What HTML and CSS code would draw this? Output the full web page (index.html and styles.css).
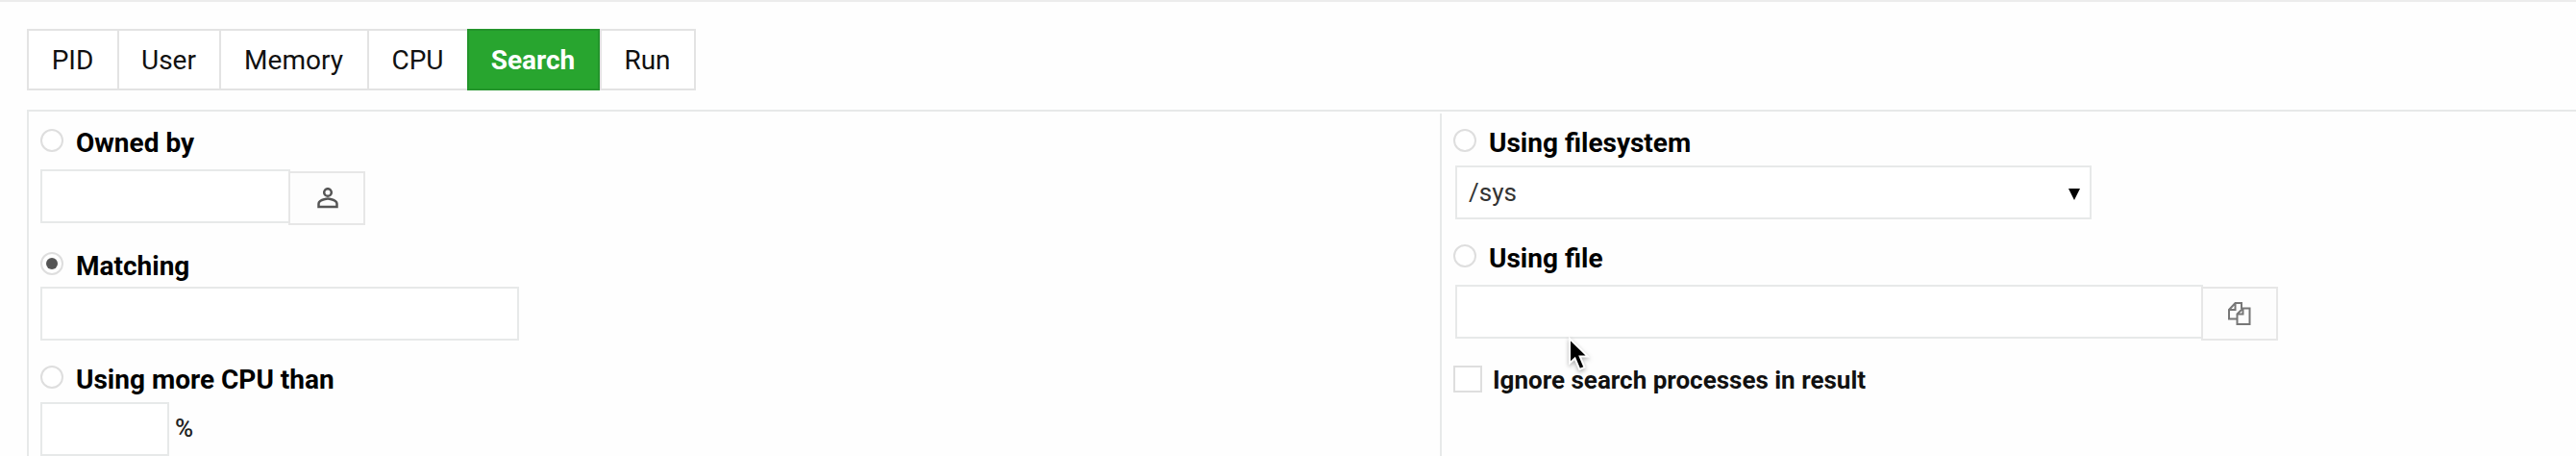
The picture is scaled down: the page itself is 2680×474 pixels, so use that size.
FILE: index.html
```
<!DOCTYPE html>
<html lang="en">
<head>
    <meta charset="UTF-8">
    <meta name="viewport" content="width=device-width, initial-scale=1.0">
    <title>Running Processes</title>
    <link rel="stylesheet" href="styles.css">
</head>
<body>
    <nav class="tabs">
        <a class="tab pid">PID</a>
        <a class="tab user">User</a>
        <a class="tab memory">Memory</a>
        <a class="tab cpu">CPU</a>
        <a class="tab search active">Search</a>
        <a class="tab run">Run</a>
    </nav>
    <form class="panel">
        <div class="column left">
            <label class="option"><span class="radio"></span><span class="label">Owned by</span></label>
            <div class="field owner">
                <div class="input"></div>
                <div class="button">
                    <svg class="user-icon" width="22" height="22" viewBox="0 0 22 22">
                        <circle cx="11" cy="5" r="3.8"/>
                        <path d="M1.500 20v-3.200c0-2.800 2.600-3.800 6.500-4.800q3-1.200 6 0c3.900 1 6.500 2 6.500 4.800V20z"/>
                    </svg>
                </div>
            </div>
            <label class="option"><span class="radio checked"></span><span class="label">Matching</span></label>
            <div class="field match">
                <div class="input"></div>
            </div>
            <label class="option"><span class="radio"></span><span class="label">Using more CPU than</span></label>
            <div class="field percent">
                <div class="input"></div>
                <span class="unit">%</span>
            </div>
        </div>
        <div class="column right">
            <label class="option"><span class="radio"></span><span class="label">Using filesystem</span></label>
            <div class="field filesystem">
                <div class="input select">
                    <span class="value">/sys</span>
                    <svg class="arrow" width="12" height="12" viewBox="0 0 12 12"><path d="M0 0h12L6 12z"/></svg>
                </div>
            </div>
            <label class="option"><span class="radio"></span><span class="label">Using file</span></label>
            <div class="field file">
                <div class="input"></div>
                <div class="button">
                    <svg class="files-icon" width="24" height="24" viewBox="0 0 24 24">
                        <path d="M9 17.500H1V8l6.500-7H14v6M1 8h6.500V1"/>
                        <path d="M15.500 6.500H22.500V23H9.500V12.500zM9.500 12.500h6v-6"/>
                    </svg>
                </div>
            </div>
            <label class="option ignore"><span class="checkbox"></span><span class="label">Ignore search processes in result</span></label>
        </div>
    </form>
    <!-- Mouse pointer -->
    <svg class="pointer" width="30" height="42" viewBox="0 0 30 42">
        <path d="M2 3v25.500l5.500-5 4.800 11.500 5.200-2.200-4.800-11.300h8.300z"/>
    </svg>
</body>
</html>
```
FILE: styles.css
```
* {
    box-sizing: border-box;
}

body {
    position: relative;
    margin: 0;
    height: 474px;
    overflow: hidden;
    border-top: 2px solid #ececec;
    background: #fefefe;
    font-family: Roboto, "Liberation Sans", sans-serif;
    font-size: 28px;
    line-height: 32px;
    color: #111;
}

.tabs {
    display: flex;
    margin: 28px 0 0 28px;
}

.tab {
    display: flex;
    align-items: center;
    justify-content: center;
    height: 64px;
    margin-right: -2px;
    padding: 2px 1px 0 0;
    border: 2px solid #e3e3e3;
    background: #fff;
}

.pid { width: 96px; }
.user { width: 108px; }
.memory { width: 156px; }
.cpu { width: 106px; }
.search { width: 138px; }
.run { width: 100px; }

.tab.active {
    z-index: 1;
    margin-right: 0;
    border-color: #23942b;
    background: #28a52f;
    color: #fff;
    font-weight: bold;
}

.panel {
    display: flex;
    height: 380px;
    margin: 20px 0 0 28px;
    border-top: 2px solid #e7e9e9;
    border-left: 2px solid #e7e9e9;
}

.left {
    width: 1468px;
    padding: 18px 0 0 12px;
}

.right {
    flex: 1;
    margin-top: 2px;
    padding: 16px 0 0 12px;
    border-left: 2px solid #e7e9e9;
}

.option {
    display: flex;
    height: 24px;
    color: #000;
    font-weight: bold;
}

.radio {
    display: flex;
    align-items: center;
    justify-content: center;
    width: 24px;
    height: 24px;
    border: 2px solid #dedede;
    border-radius: 50%;
    background: #fff;
}

.radio.checked::after {
    content: "";
    width: 12px;
    height: 12px;
    border-radius: 50%;
    background: #555;
}

.label {
    margin: -1px 0 0 13px;
}

.field {
    display: flex;
}

.input {
    height: 56px;
    border: 2px solid #e7e9e9;
    background: #fff;
}

.button {
    display: flex;
    align-items: center;
    justify-content: center;
    width: 80px;
    height: 56px;
    margin: 2px 0 0 -2px;
    border: 2px solid #e7e7e7;
    background: #fdfdfd;
}

.owner {
    margin: 18px 0 28px;
}

.owner .input {
    width: 260px;
}

.owner .button {
    padding-left: 2px;
}

.match {
    margin: 12px 0 26px;
}

.match .input {
    width: 498px;
}

.percent {
    margin-top: 14px;
}

.percent .input {
    width: 134px;
}

.unit {
    margin: 11px 0 0 6px;
    font-size: 26px;
    font-weight: 500;
    color: #222;
}

.filesystem {
    margin: 14px 0 26px 2px;
}

.select {
    display: flex;
    align-items: center;
    justify-content: space-between;
    width: 662px;
    padding: 0 10px 0 12px;
    font-size: 26px;
    color: #333;
}

.value {
    margin-top: -1px;
}

.arrow {
    margin-top: 3px;
    fill: #000;
}

.file {
    margin: 18px 0 26px 2px;
}

.file .input {
    width: 778px;
}

.checkbox {
    width: 30px;
    height: 28px;
    border: 2px solid #dedede;
    background: #fff;
}

.ignore {
    color: #111;
    font-size: 26px;
}

.ignore .label {
    margin-left: 11px;
}

.user-icon {
    fill: none;
    stroke: #555;
    stroke-width: 2.5;
}

.files-icon {
    fill: none;
    stroke: #777;
    stroke-width: 2;
}

.files-icon path:last-child {
    fill: #fdfdfd;
}

.pointer {
    position: absolute;
    left: 1631px;
    top: 347px;
    fill: #000;
    stroke: #fff;
    stroke-width: 2;
    filter: drop-shadow(0 2px 2px rgba(0, 0, 0, 0.3));
}
```
